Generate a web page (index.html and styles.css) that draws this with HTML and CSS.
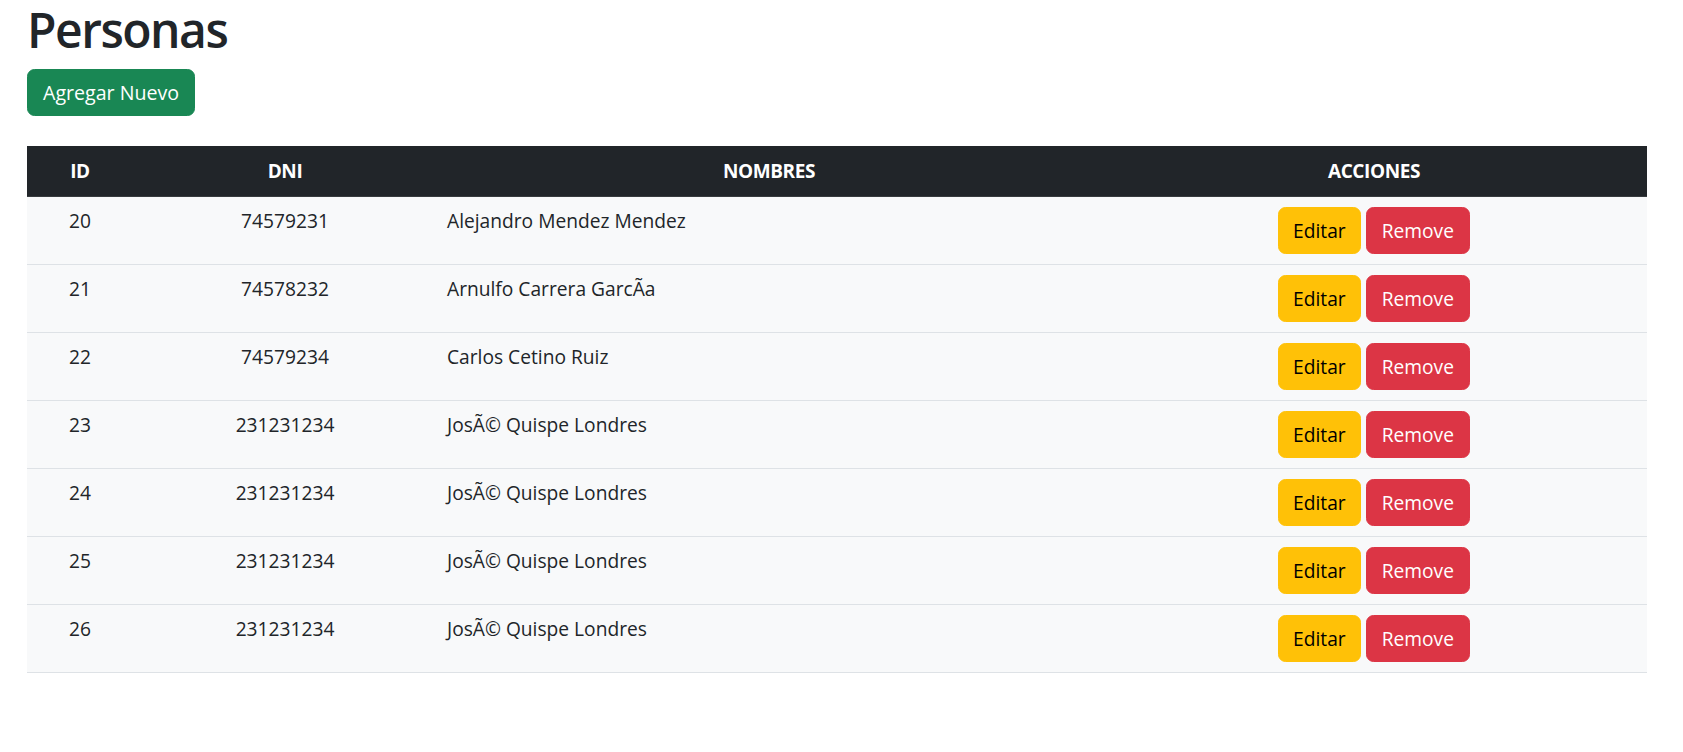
FILE: index.html
```html
<!DOCTYPE html>
<html lang="es">
<head>
<meta charset="utf-8">
<title>Personas</title>
<link rel="stylesheet" href="styles.css">
</head>
<body>
<div class="page">
  <h1 class="title">Personas</h1>
  <button class="btn btn-success">Agregar Nuevo</button>
  <table class="table">
    <colgroup>
      <col class="c-id"><col class="c-dni"><col class="c-name"><col class="c-act">
    </colgroup>
    <thead>
      <tr><th>ID</th><th>DNI</th><th>NOMBRES</th><th>ACCIONES</th></tr>
    </thead>
    <tbody>
      <tr><td class="center">20</td><td class="center">74579231</td><td>Alejandro Mendez Mendez</td><td class="center"><button class="btn btn-warning">Editar</button> <button class="btn btn-danger">Remove</button></td></tr>
      <tr><td class="center">21</td><td class="center">74578232</td><td>Arnulfo Carrera GarcÃa</td><td class="center"><button class="btn btn-warning">Editar</button> <button class="btn btn-danger">Remove</button></td></tr>
      <tr><td class="center">22</td><td class="center">74579234</td><td>Carlos Cetino Ruiz</td><td class="center"><button class="btn btn-warning">Editar</button> <button class="btn btn-danger">Remove</button></td></tr>
      <tr><td class="center">23</td><td class="center">231231234</td><td>JosÃ© Quispe Londres</td><td class="center"><button class="btn btn-warning">Editar</button> <button class="btn btn-danger">Remove</button></td></tr>
      <tr><td class="center">24</td><td class="center">231231234</td><td>JosÃ© Quispe Londres</td><td class="center"><button class="btn btn-warning">Editar</button> <button class="btn btn-danger">Remove</button></td></tr>
      <tr><td class="center">25</td><td class="center">231231234</td><td>JosÃ© Quispe Londres</td><td class="center"><button class="btn btn-warning">Editar</button> <button class="btn btn-danger">Remove</button></td></tr>
      <tr><td class="center">26</td><td class="center">231231234</td><td>JosÃ© Quispe Londres</td><td class="center"><button class="btn btn-warning">Editar</button> <button class="btn btn-danger">Remove</button></td></tr>
    </tbody>
  </table>
</div>
</body>
</html>
```
FILE: styles.css
```css
html, body {
  margin: 0;
  padding: 0;
  background: #fff;
}
body {
  font-family: "Open Sans", "Noto Sans", sans-serif;
  font-size: 19.2px;
  line-height: 1.5;
  color: #212529;
}
.page {
  padding: 0 36px 0 27px;
}
.title {
  margin: 0 0 9px;
  font-size: 48px;
  font-weight: 600;
  line-height: 60px;
  letter-spacing: -1.5px;
}
.btn {
  display: inline-block;
  font-family: inherit;
  font-size: 19.2px;
  line-height: 30px;
  padding: 7.5px 15px;
  border: 1px solid transparent;
  border-radius: 7.5px;
  cursor: pointer;
}
.btn-success { background: #198754; border-color: #198754; color: #fff; font-size: 19.6px; }
.btn-warning { background: #ffc107; border-color: #ffc107; color: #000; padding: 7.5px 14px; }
.btn-danger { background: #dc3545; border-color: #dc3545; color: #fff; }
.table {
  margin-top: 30px;
  width: 100%;
  border-collapse: collapse;
  table-layout: fixed;
}
.c-id { width: 106px; }
.c-dni { width: 304px; }
.c-name { width: 664px; }
.c-act { width: 546px; }
.table th {
  background: #212529;
  color: #fff;
  font-weight: 700;
  text-align: center;
  padding: 10px;
  line-height: 30px;
  border-bottom: 1px solid #373b3e;
  font-size: 19px;
  letter-spacing: -0.4px;
}
.table td {
  background: #f8f9fa;
  padding: 10px;
  vertical-align: top;
  border-bottom: 1px solid #dee2e6;
}
.table td.center { text-align: center; }
```
